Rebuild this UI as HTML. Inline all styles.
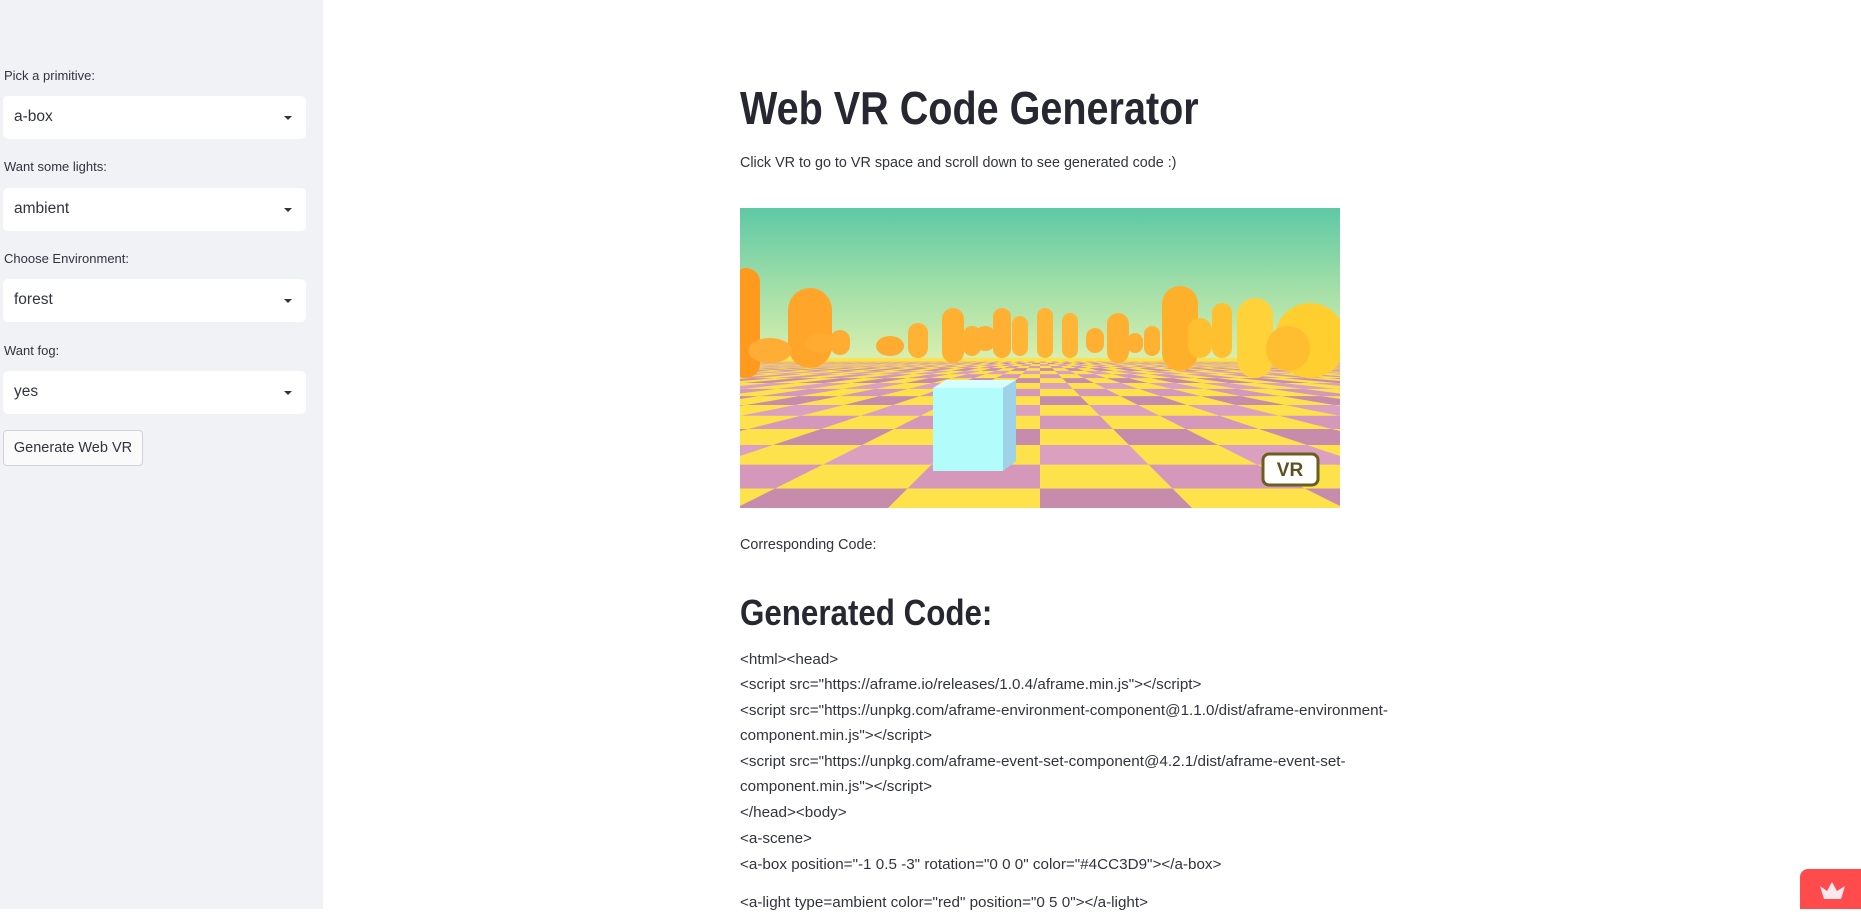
<!DOCTYPE html>
<html><head><meta charset="utf-8"><style>
body{margin:0;width:1861px;height:909px;overflow:hidden;background:#fff;font-family:"Liberation Sans",sans-serif;color:#31333f;position:relative}
.sb{position:absolute;left:0;top:0;width:323px;height:909px;background:#f0f2f6}
.lbl{position:absolute;left:4px;font-size:13px;color:#31333f}
.sel{position:absolute;left:3px;width:303px;height:43px;background:#fff;border-radius:5px}
.sel span{position:absolute;left:11px;top:12px;font-size:15.5px}
.sel i{position:absolute;right:14px;top:20px;width:0;height:0;border-left:4px solid transparent;border-right:4px solid transparent;border-top:4px solid #31333f}
.btn{position:absolute;left:3px;top:430px;width:138px;height:34px;border:1px solid #d0d2d8;border-radius:4px;background:#fafafa;font-size:14.5px;line-height:34px;text-align:center}
.main{position:absolute;left:740px;top:0}
h1{position:absolute;left:0;top:82px;margin:0;font-size:46px;font-weight:bold;color:#262730;white-space:nowrap;transform:scaleX(.86);transform-origin:left;line-height:52px}
h2{position:absolute;left:0;top:592px;margin:0;font-size:36px;font-weight:bold;color:#262730;white-space:nowrap;transform:scaleX(.87);transform-origin:left;line-height:42px}
.p{position:absolute;left:0;font-size:14.5px;white-space:nowrap;transform:scaleX(.99);transform-origin:left}
.code div{position:absolute;left:0;font-size:14.5px;white-space:nowrap;transform:scaleX(1.05);transform-origin:left}
</style></head><body>
<div class="sb">
<div class="lbl" style="top:68px">Pick a primitive:</div>
<div class="sel" style="top:96px"><span>a-box</span><i></i></div>
<div class="lbl" style="top:159px">Want some lights:</div>
<div class="sel" style="top:188px"><span>ambient</span><i></i></div>
<div class="lbl" style="top:251px">Choose Environment:</div>
<div class="sel" style="top:279px"><span>forest</span><i></i></div>
<div class="lbl" style="top:343px">Want fog:</div>
<div class="sel" style="top:371px"><span>yes</span><i></i></div>
<div class="btn">Generate Web VR</div>
</div>
<div class="main">
<h1>Web VR Code Generator</h1>
<div class="p" style="top:155px">Click VR to go to VR space and scroll down to see generated code :)</div>
<svg id="sc" style="position:absolute;left:0;top:208px" width="600" height="300" viewBox="0 0 600 300">
<defs><linearGradient id="sky" x1="0" y1="0" x2="0" y2="1"><stop offset="0" stop-color="#5ec8a6"/><stop offset="0.5" stop-color="#a6e0a8"/><stop offset="1" stop-color="#e8f3b0"/></linearGradient></defs>
<rect width="600" height="170" fill="url(#sky)"/>
<rect y="150" width="600" height="150" fill="#fde24c"/>
<g id="g"></g><g id="t"></g>
<polygon points="193,180 263,180 276,172 206,172" fill="#d8ffff"/>
<rect x="193" y="180" width="70" height="83" fill="#b2fdfc"/>
<polygon points="263,180 276,172 276,253 263,263" fill="#9dd2e8"/>
<rect x="523" y="246" width="55" height="31" rx="6" fill="#fff" stroke="#6b5f1f" stroke-width="3"/>
<text x="550" y="268" text-anchor="middle" font-family="Liberation Sans" font-weight="bold" font-size="19" fill="#5a5020">VR</text>
</svg>
<div class="p" style="top:537px">Corresponding Code:</div>
<h2>Generated Code:</h2>
<div class="code">
<div style="top:652px">&lt;html&gt;&lt;head&gt;</div>
<div style="top:677px">&lt;script src="https://aframe.io/releases/1.0.4/aframe.min.js"&gt;&lt;/script&gt;</div>
<div style="top:703px">&lt;script src="https://unpkg.com/aframe-environment-component@1.1.0/dist/aframe-environment-</div>
<div style="top:728px">component.min.js"&gt;&lt;/script&gt;</div>
<div style="top:754px">&lt;script src="https://unpkg.com/aframe-event-set-component@4.2.1/dist/aframe-event-set-</div>
<div style="top:779px">component.min.js"&gt;&lt;/script&gt;</div>
<div style="top:805px">&lt;/head&gt;&lt;body&gt;</div>
<div style="top:831px">&lt;a-scene&gt;</div>
<div style="top:857px">&lt;a-box position="-1 0.5 -3" rotation="0 0 0" color="#4CC3D9"&gt;&lt;/a-box&gt;</div>
<div style="top:895px">&lt;a-light type=ambient color="red" position="0 5 0"&gt;&lt;/a-light&gt;</div>
</div>
</div>
<div style="position:absolute;left:1800px;top:869px;width:61px;height:40px;background:#ff4b4b;border-top-left-radius:8px">
<svg width="61" height="40"><polygon points="20,17 27,22 32,13 37,22 45,17 41,30 24,30" fill="#fde8ee"/></svg></div>
<script>
var ns="http://www.w3.org/2000/svg",g=document.getElementById('g'),t=document.getElementById('t');
function poly(p,c,par){var e=document.createElementNS(ns,'polygon');e.setAttribute('points',p);e.setAttribute('fill',c);par.appendChild(e)}
var h=148,k=55,vx=300;
function Y(z){return h+k*4/z}function X(x,z){return vx+x*k*4/z}
var zs=[];for(var z=40;z>0.7;z/=1.22)zs.push(z);
for(var i=0;i<zs.length-1;i++){var z1=zs[i],z2=zs[i+1];for(var j=-60;j<60;j++){if((i+j)%2==0){var pinks=['#d598ba','#c78bab','#dba0bf'];poly(X(j,z1)+','+Y(z1)+' '+X(j+1,z1)+','+Y(z1)+' '+X(j+1,z2)+','+Y(z2)+' '+X(j,z2)+','+Y(z2),pinks[(i*7+j*3+300)%3],g)}}}
var trees=[[70,80,22,80,'#ffa62a'],[6,60,14,110,'#ff9a1e'],[30,130,22,25,'#ffad35'],[80,125,16,20,'#ffaa30'],[150,128,14,20,'#ffaa30'],[178,115,10,35,'#ffb233'],[213,100,11,55,'#ffb030'],[232,118,9,30,'#ffb232'],[262,100,9,50,'#ffb033'],[280,108,8,40,'#ffb536'],[305,100,8,50,'#ffb434'],[330,105,8,45,'#ffb535'],[378,105,11,50,'#ffb030'],[412,118,8,30,'#ffb232'],[440,78,18,85,'#ffb02a'],[460,110,12,40,'#ffc030'],[482,95,10,55,'#ffc030'],[515,90,18,80,'#ffd23a'],[570,95,35,75,'#ffcf30'],[548,118,22,45,'#ffbe30'],[100,122,10,25,'#ffac33'],[245,118,12,25,'#ffaf33'],[395,125,8,20,'#ffb033'],[355,120,9,25,'#ffb033']];
trees.forEach(function(a){var e=document.createElementNS(ns,'rect');e.setAttribute('x',a[0]-a[2]);e.setAttribute('y',a[1]);e.setAttribute('width',a[2]*2);e.setAttribute('height',a[3]);e.setAttribute('rx',a[2]);e.setAttribute('fill',a[4]);t.appendChild(e)});
</script>
</body></html>
